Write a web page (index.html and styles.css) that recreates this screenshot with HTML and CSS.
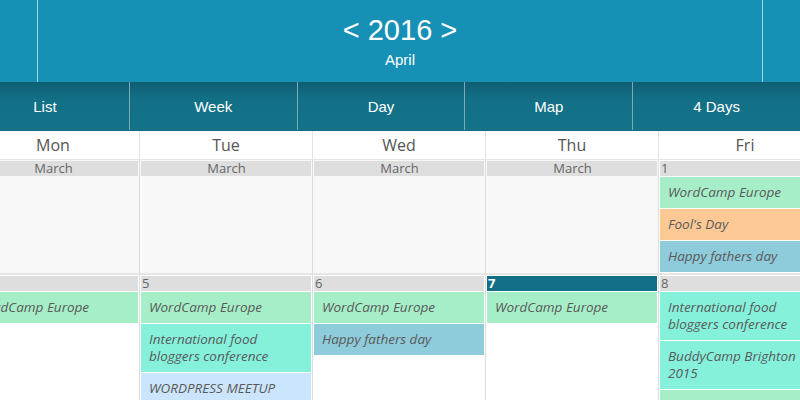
FILE: index.html
```html
<!DOCTYPE html>
<html>
<head>
<meta charset="utf-8">
<link rel="stylesheet" href="styles.css">
</head>
<body>
<div class="page">
  <header class="top">
    <div class="side"></div>
    <div class="title">
      <div class="year">&lt; 2016 &gt;</div>
      <div class="month">April</div>
    </div>
    <div class="side side-right"></div>
  </header>
  <nav class="views">
    <div class="view">List</div>
    <div class="view">Week</div>
    <div class="view">Day</div>
    <div class="view">Map</div>
    <div class="view">4 Days</div>
  </nav>
  <div class="cal">
    <div class="dayname">Mon</div>
    <div class="dayname">Tue</div>
    <div class="dayname">Wed</div>
    <div class="dayname">Thu</div>
    <div class="dayname">Fri</div>

    <div class="cell prev"><div class="date center">March</div></div>
    <div class="cell prev"><div class="date center">March</div></div>
    <div class="cell prev"><div class="date center">March</div></div>
    <div class="cell prev"><div class="date center">March</div></div>
    <div class="cell">
      <div class="date">1</div>
      <div class="ev green">WordCamp Europe</div>
      <div class="ev orange">Fool's Day</div>
      <div class="ev blue">Happy fathers day</div>
    </div>

    <div class="cell">
      <div class="date">4</div>
      <div class="ev green">WordCamp Europe</div>
    </div>
    <div class="cell">
      <div class="date">5</div>
      <div class="ev green">WordCamp Europe</div>
      <div class="ev teal">International food bloggers conference</div>
      <div class="ev sky">WORDPRESS MEETUP</div>
    </div>
    <div class="cell">
      <div class="date">6</div>
      <div class="ev green">WordCamp Europe</div>
      <div class="ev blue">Happy fathers day</div>
    </div>
    <div class="cell">
      <div class="date today">7</div>
      <div class="ev green">WordCamp Europe</div>
    </div>
    <div class="cell">
      <div class="date">8</div>
      <div class="ev teal">International food bloggers conference</div>
      <div class="ev teal">BuddyCamp Brighton 2015</div>
      <div class="ev green">WordCamp Europe</div>
    </div>
  </div>
</div>
</body>
</html>
```
FILE: styles.css
```css
html, body {
  margin: 0;
  padding: 0;
  background: #fff;
}
body {
  width: 800px;
  height: 400px;
  overflow: hidden;
}
.page {
  width: 800px;
}
.top {
  display: flex;
  height: 82px;
  background: #1690b4;
  color: #fff;
  font-family: "Liberation Sans", Arial, sans-serif;
}
.side {
  width: 37px;
  border-right: 1px solid #a9d2df;
}
.side-right {
  border-right: none;
  border-left: 1px solid #a9d2df;
}
.title {
  flex: 1;
  text-align: center;
  padding-top: 14px;
}
.year {
  font-size: 29px;
  line-height: 32px;
}
.month {
  font-size: 15px;
  line-height: 20px;
  margin-top: 4px;
}
.views {
  display: grid;
  grid-template-columns: repeat(5, 1fr);
  width: 839px;
  margin-left: -39px;
  height: 48px;
  background: linear-gradient(#0e5f73, #126f86 35%, #147389);
  border-bottom: 1px solid #0f6a80;
  font-family: "Liberation Sans", Arial, sans-serif;
  font-size: 15px;
  color: #fff;
}
.view {
  display: flex;
  align-items: center;
  justify-content: center;
  border-left: 1px solid #7fa9b6;
}
.view:first-child {
  border-left: none;
}
.cal {
  display: grid;
  grid-template-columns: repeat(5, 173px);
  width: 865px;
  margin-left: -33px;
  font-family: "Open Sans", "Noto Sans", sans-serif;
  color: #666;
}
.dayname {
  height: 28px;
  line-height: 28px;
  text-align: center;
  font-size: 16px;
  color: #555;
  border-right: 1px solid #e4e4e4;
  border-bottom: 1px solid #e4e4e4;
}
.cell {
  border-right: 1px solid #dcdcdc;
  border-bottom: 2px solid #e6e6e6;
  padding: 1px 1px 0 1px;
  display: flex;
  flex-direction: column;
  gap: 1px;
  min-height: 112px;
}
.cell.prev {
  background: #f8f8f8;
}
.date {
  height: 15px;
  line-height: 15px;
  background: #dedede;
  font-size: 13px;
  color: #666;
  padding-left: 1px;
}
.date.center {
  text-align: center;
}
.date.today {
  background: #126f86;
  color: #fff;
  font-weight: bold;
}
.ev {
  font-style: italic;
  font-size: 13.5px;
  line-height: 17px;
  padding: 7px 8px;
  color: #5a5a5a;
}
.green { background: #a6eec8; }
.orange { background: #fcc995; }
.blue { background: #8ecbdb; }
.teal { background: #85f1da; }
.sky { background: #cbe5fc; }
```
